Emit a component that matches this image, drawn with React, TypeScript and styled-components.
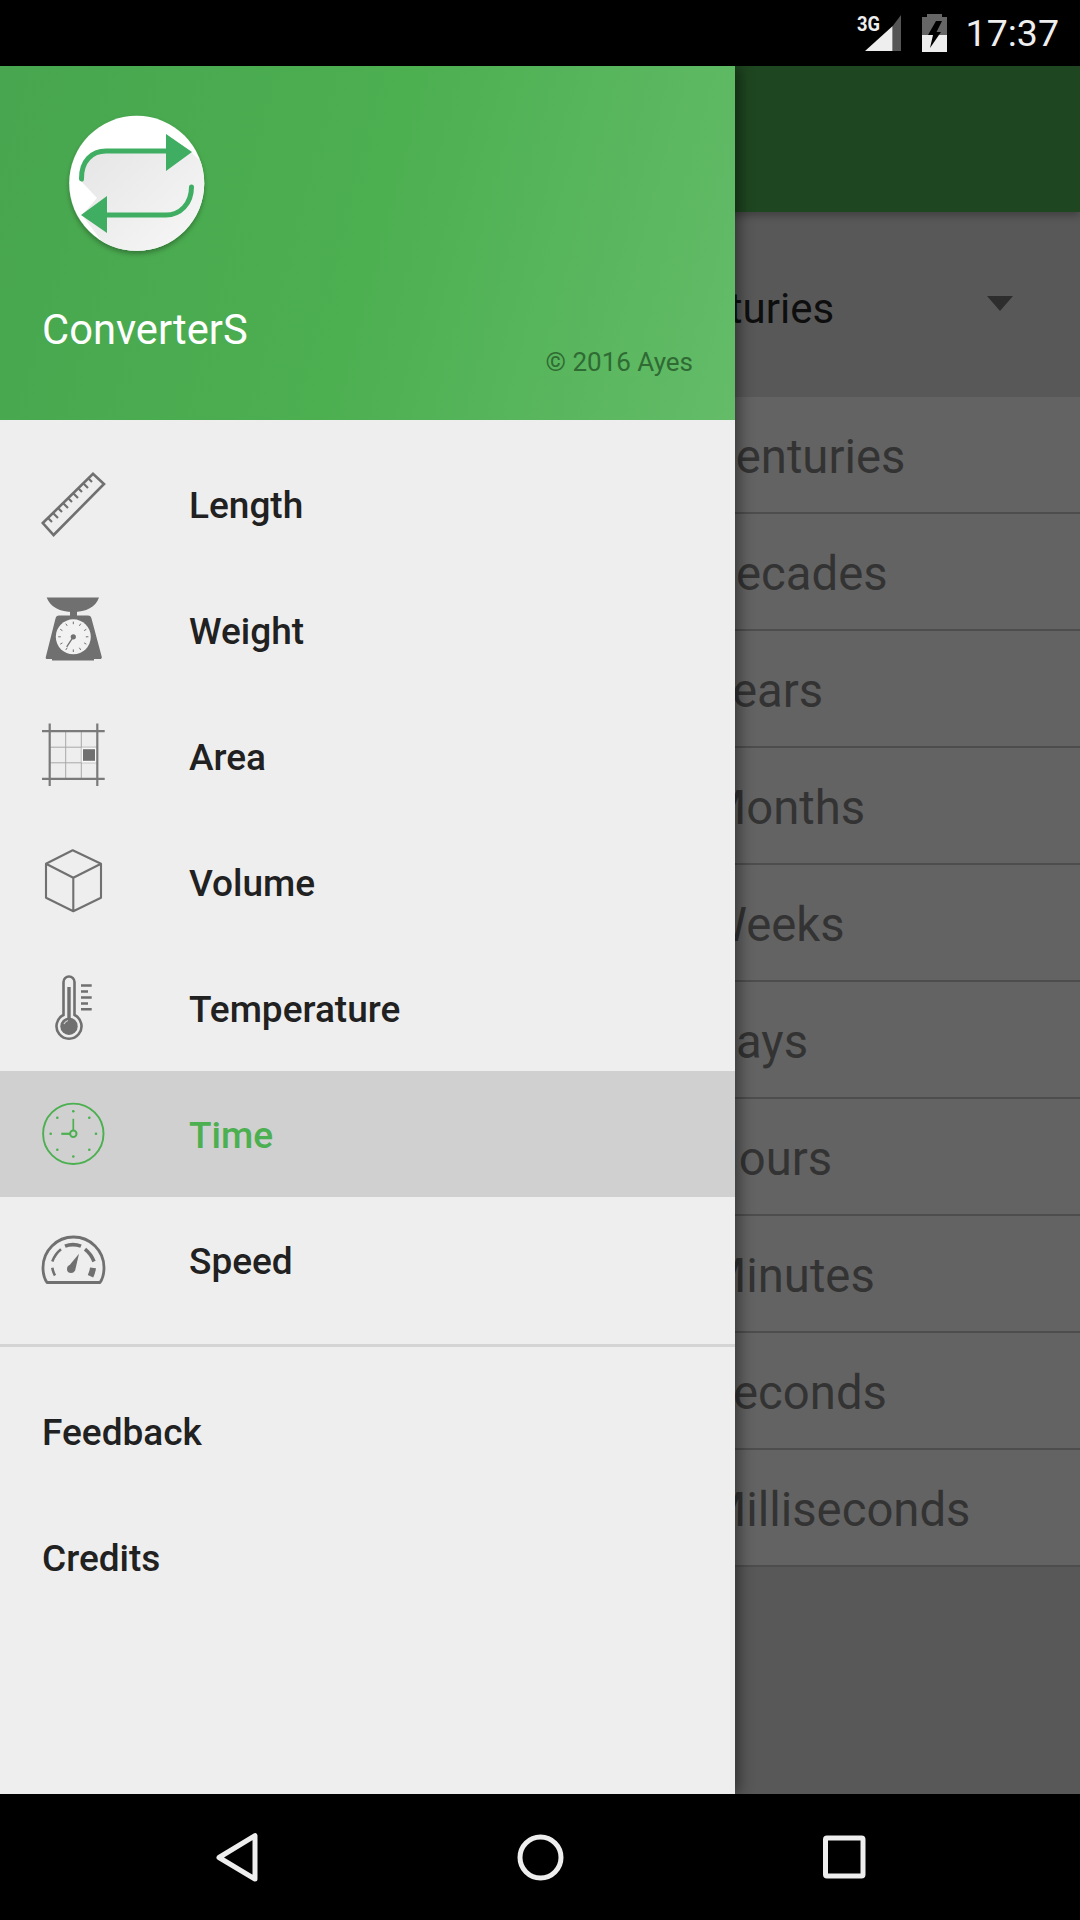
import React from "react";
import styled, { createGlobalStyle } from "styled-components";

const GlobalStyle = createGlobalStyle`
    html, body {
        margin: 0;
        padding: 0;
        background: #000;
    }
    * {
        box-sizing: border-box;
    }
`;

const GREY = "#707070";
const GREEN = "#4caf50";

const RulerIcon = () => (
    <IconSvg viewBox="0 0 63 63">
        <g fill="none" stroke={GREY}>
            <path d="M0.8 50 L51 0.8 L62 11 L11.6 62 Z" strokeWidth="2.6" />
            <path
                d="M6 45 L10 49 M11 40 L16 45 M16 35 L20 39 M21 30 L26 35 M26 25 L30 29 M31 20 L36 25 M36 15 L40 19 M41 10 L46 15 M46 5 L50 9"
                strokeWidth="2.2"
            />
        </g>
    </IconSvg>
);

const ScaleIcon = () => (
    <IconSvg viewBox="0 0 63 63">
        <path d="M4.7 -1.5 H57 C54 8 44 13 31 13 C18 13 8 8 4.7 -1.5 Z" fill={GREY} />
        <rect x="28" y="12" width="7" height="6" fill={GREY} />
        <path
            d="M17 16.5 H46 C48 16.5 49 17.5 49.5 19.5 L59.8 58 C60 59.5 59 60 58 60 H52 V61.5 H10 V60 H5 C4 60 3.5 59.5 3.8 58 L13.5 19.5 C14 17.5 15 16.5 17 16.5 Z"
            fill={GREY}
        />
        <circle cx="31.3" cy="37.8" r="17.5" fill="#f2f2f2" />
        <g stroke={GREY} strokeWidth="1" strokeLinecap="round">
            <path d="M31.3 23 V24.8 M38.5 25 L37.6 26.5 M44 30.5 L42.5 31.4 M46 37.8 H44.2 M44 45 L42.5 44.1 M38.5 50.6 L37.6 49.1 M31.3 52.6 V50.8 M24 50.6 L25 49.1 M18.6 45 L20.1 44.1 M16.6 37.8 H18.4 M18.6 30.5 L20.1 31.4 M24 25 L25 26.5" />
        </g>
        <path d="M31.3 37.8 L24.7 47.8" stroke={GREY} strokeWidth="1.3" />
        <circle cx="31.3" cy="37.8" r="2.6" fill={GREY} />
    </IconSvg>
);

const AreaIcon = () => (
    <IconSvg viewBox="0 0 63 63">
        <path d="M23.7 6 V54 M39.3 6 V54 M8 22.2 H55 M8 37.8 H55" stroke="#a8a8a8" strokeWidth="1" fill="none" />
        <rect x="39.6" y="22.6" width="15" height="15" fill="#f8f8f8" />
        <rect x="41" y="24.2" width="12" height="11.6" fill={GREY} />
        <path d="M0 6.2 H62.7 M0 53.8 H62.7 M7.7 -1.5 V61 M55.3 -1.5 V61" stroke="#7a7a7a" strokeWidth="2.2" fill="none" />
    </IconSvg>
);

const VolumeIcon = () => (
    <IconSvg viewBox="0 0 63 63">
        <path
            d="M30.7 -0.8 L59 12.8 V46.8 L31.3 60.2 L4 46.8 V12.8 Z M4 12.8 L31.3 26.8 L59 12.8 M31.3 26.8 V60.2"
            fill="none"
            stroke={GREY}
            strokeWidth="2.1"
            strokeLinejoin="round"
        />
    </IconSvg>
);

const ThermometerIcon = () => (
    <IconSvg viewBox="0 0 63 63">
        <path
            d="M21.5 38 V5 A5.5 5.5 0 0 1 32.5 5 V38 A12.5 12.5 0 1 1 21.5 38 Z"
            fill="none"
            stroke={GREY}
            strokeWidth="2.6"
        />
        <rect x="25.3" y="10" width="3.4" height="32" fill={GREY} />
        <circle cx="27" cy="49.2" r="8.7" fill={GREY} />
        <path d="M22 47 A6 6 0 0 1 26 43.5" stroke="#cfcfcf" strokeWidth="1.2" fill="none" />
        <path d="M39 8.5 H49.7 M39 14.5 H46 M39 20.5 H49.7 M39 26.5 H46 M39 32.2 H49.7" stroke={GREY} strokeWidth="2.4" />
    </IconSvg>
);

const ClockIcon = () => (
    <IconSvg viewBox="0 0 63 63">
        <g fill="none" stroke={GREEN}>
            <circle cx="31.3" cy="30.8" r="30.2" strokeWidth="1.9" />
            <circle cx="31.3" cy="30.8" r="3.2" strokeWidth="2" />
            <path d="M31.3 27.5 V15.8" strokeWidth="1.7" />
            <path d="M28 30.8 H19.3" strokeWidth="2.2" />
        </g>
        <g fill={GREEN}>
            <circle cx="31.3" cy="8.2" r="1.3" />
            <circle cx="47.3" cy="14.8" r="1.3" />
            <circle cx="54" cy="30.8" r="1.3" />
            <circle cx="47.3" cy="46.8" r="1.3" />
            <circle cx="31.3" cy="53.5" r="1.3" />
            <circle cx="15.3" cy="46.8" r="1.3" />
            <circle cx="8.7" cy="30.8" r="1.3" />
            <circle cx="15.3" cy="14.8" r="1.3" />
        </g>
    </IconSvg>
);

const SpeedIcon = () => (
    <IconSvg viewBox="0 0 63 63">
        <g fill="none" stroke={GREY}>
            <path
                d="M5 53.5 H58 C60.5 50 62 44 62 38.5 A30.5 30.5 0 0 0 1 38.5 C1 44 2.5 50 5 53.5 Z"
                strokeWidth="2.8"
                strokeLinejoin="round"
            />
            <path d="M23 17.2 Q31 14 39 17.2" strokeWidth="3.6" />
            <path d="M10.3 32.5 Q13 25 19 20.2" strokeWidth="2.6" />
            <path d="M43 20.2 Q49 25 52 32.5" strokeWidth="3.6" />
            <path d="M10.3 38.8 Q11 43 13 46.5" strokeWidth="2.6" />
            <path d="M51 38.8 Q50.5 43 48.5 47.2" strokeWidth="6" />
        </g>
        <path d="M37 24.8 L33 42 L26 38 Z" fill={GREY} />
        <circle cx="29" cy="40" r="4" fill={GREY} />
    </IconSvg>
);

const AppLogo = () => (
    <LogoSvg viewBox="0 0 180 170">
        <defs>
            <clipPath id="logoClip">
                <circle cx="86.7" cy="83.3" r="67.5" />
            </clipPath>
            <linearGradient id="logoShade" x1="0" y1="0" x2="1" y2="1">
                <stop offset="0" stopColor="#e4e4e4" />
                <stop offset="1" stopColor="#f8f8f8" />
            </linearGradient>
            <filter id="logoShadow" x="-20%" y="-20%" width="140%" height="140%">
                <feDropShadow dx="0" dy="3" stdDeviation="2.5" floodColor="#000" floodOpacity="0.3" />
            </filter>
        </defs>
        <circle cx="86.7" cy="83.3" r="67.5" fill="#fff" filter="url(#logoShadow)" />
        <path
            d="M30 80 C30 62 42 51 56 51 H116 V34 L141 52 L160 70 V155 H62 L32 115 L47 98 Z"
            fill="url(#logoShade)"
            clipPath="url(#logoClip)"
        />
        <g fill="none" stroke="#3fae62" strokeWidth="5" strokeLinecap="round">
            <path d="M31.5 79 C31 61 42 51 56 51 H118" />
            <path d="M141.5 87 C141.5 104 130 115 116 115 H55" />
        </g>
        <path d="M116 34 L142 52 L116 71 Z M57 96 L31 115 L57 133 Z" fill="#3fae62" />
    </LogoSvg>
);

const NAV_ITEMS = [
    { label: "Length", Icon: RulerIcon },
    { label: "Weight", Icon: ScaleIcon },
    { label: "Area", Icon: AreaIcon },
    { label: "Volume", Icon: VolumeIcon },
    { label: "Temperature", Icon: ThermometerIcon },
    { label: "Time", Icon: ClockIcon, active: true },
    { label: "Speed", Icon: SpeedIcon }
];

const UNITS = [
    "Centuries",
    "Decades",
    "Years",
    "Months",
    "Weeks",
    "Days",
    "Hours",
    "Minutes",
    "Seconds",
    "Milliseconds"
];

const App: React.FC = () => {
    return (
        <Screen>
            <GlobalStyle />
            <StatusBar>
                <StatusIcon width="46" height="40" viewBox="0 0 46 40">
                    <text x="0" y="18" fill="#eee" fontFamily="Roboto, sans-serif" fontSize="20" fontWeight="700" textLength="23" lengthAdjust="spacingAndGlyphs">
                        3G
                    </text>
                    <path d="M8 38 L35.7 13 V38 Z" fill="#eee" />
                    <path d="M35.7 13 L44 2 V38 H35.7 Z" fill="#555" />
                </StatusIcon>
                <StatusIcon width="25" height="38" viewBox="0 0 25 38">
                    <path d="M5 0 H20 V3 H25 V21 H0 V3 H5 Z" fill="#666" />
                    <rect x="0" y="21" width="25" height="17" fill="#eee" />
                    <path d="M14 7 H20 L14.5 18 H19 L8 34 L11 21 H6 Z" fill="#000" />
                </StatusIcon>
                <Clock>17:37</Clock>
            </StatusBar>

            <Main>
                <Content>
                    <AppBar />
                    <Spinner>
                        <SpinnerText>Centuries</SpinnerText>
                        <Caret />
                    </Spinner>
                    <UnitList>
                        {UNITS.map((unit) => (
                            <UnitRow key={unit}>{unit}</UnitRow>
                        ))}
                    </UnitList>
                </Content>

                <Drawer>
                    <DrawerHeader>
                        <AppLogo />
                        <HeaderRow>
                            <AppName>ConverterS</AppName>
                            <Copyright>© 2016 Ayes</Copyright>
                        </HeaderRow>
                    </DrawerHeader>
                    <NavSection>
                        {NAV_ITEMS.map(({ label, Icon, active }) => (
                            <NavRow key={label} $active={active}>
                                <Icon />
                                <NavLabel $active={active}>{label}</NavLabel>
                            </NavRow>
                        ))}
                    </NavSection>
                    <Divider />
                    <NavRow>
                        <NavLabel>Feedback</NavLabel>
                    </NavRow>
                    <NavRow>
                        <NavLabel>Credits</NavLabel>
                    </NavRow>
                </Drawer>
            </Main>

            <NavBar>
                <SoftKey viewBox="0 0 63 63">
                    <path d="M50 9.7 V53 L14 31.5 Z" strokeLinejoin="round" />
                </SoftKey>
                <SoftKey viewBox="0 0 63 63">
                    <circle cx="31.5" cy="31.5" r="20.5" />
                </SoftKey>
                <SoftKey viewBox="0 0 63 63">
                    <rect x="12.5" y="12" width="37.5" height="38" rx="1.5" />
                </SoftKey>
            </NavBar>
        </Screen>
    );
};

const Screen = styled.div`
    display: flex;
    flex-direction: column;
    width: 1080px;
    height: 1920px;
    overflow: hidden;
    font-family: Roboto, "Liberation Sans", sans-serif;
`;

const StatusBar = styled.div`
    display: flex;
    justify-content: flex-end;
    align-items: center;
    gap: 19px;
    height: 66px;
    padding-right: 21px;
    background-color: #000;
`;

const StatusIcon = styled.svg`
    flex-shrink: 0;
`;

const Clock = styled.div`
    font-size: 37.5px;
    color: #eeeeee;
`;

const Main = styled.div`
    position: relative;
    flex: 1;
    background-color: #585858;
`;

const Content = styled.div`
    display: flex;
    flex-direction: column;
`;

const AppBar = styled.div`
    height: 146px;
    background-color: #1e4620;
    box-shadow: rgb(0 0 0 / 30%) 0px 3px 8px 0px;
    position: relative;
`;

const Spinner = styled.div`
    display: flex;
    align-items: center;
    height: 185px;
    padding: 0 67px 0 656px;
    justify-content: space-between;
`;

const SpinnerText = styled.div`
    font-size: 42px;
    color: #0e0e0e;
    padding-top: 7px;
`;

const Caret = styled.div`
    width: 0;
    height: 0;
    margin-bottom: 3px;
    border-left: 13px solid transparent;
    border-right: 13px solid transparent;
    border-top: 15px solid #2d2d2d;
`;

const UnitList = styled.div`
    display: flex;
    flex-direction: column;
`;

const UnitRow = styled.div`
    display: flex;
    align-items: center;
    height: 117px;
    padding: 5px 0 0 705px;
    font-size: 47.25px;
    color: #333333;
    background-color: #636363;
    border-bottom: 2px solid #4d4d4d;
`;

const Drawer = styled.div`
    position: absolute;
    top: 0;
    left: 0;
    bottom: 0;
    display: flex;
    flex-direction: column;
    width: 735px;
    background-color: #eeeeee;
    box-shadow: rgb(0 0 0 / 45%) 4px 0px 14px 0px;
`;

const DrawerHeader = styled.div`
    display: flex;
    flex-direction: column;
    height: 354px;
    padding: 34px 42px 0 42px;
    background: linear-gradient(105deg, #47a64f 0%, #4caf50 50%, #64bc69 100%);
`;

const LogoSvg = styled.svg`
    width: 180px;
    height: 170px;
    margin-left: 8px;
`;

const HeaderRow = styled.div`
    display: flex;
    justify-content: space-between;
    align-items: flex-end;
    margin-top: 35px;
`;

const AppName = styled.div`
    font-size: 41.7px;
    color: #ffffff;
`;

const Copyright = styled.div`
    font-size: 26px;
    color: #2f6b33;
    margin-bottom: -23px;
`;

const NavSection = styled.div`
    display: flex;
    flex-direction: column;
    padding-top: 21px;
`;

const NavRow = styled.div<{ $active?: boolean }>`
    display: flex;
    align-items: center;
    gap: 84px;
    height: 126px;
    padding-left: 42px;
    background-color: ${(props) => (props.$active ? "#d0d0d0" : "transparent")};
`;

const IconSvg = styled.svg`
    flex-shrink: 0;
    width: 63px;
    height: 63px;
    overflow: visible;
`;

const NavLabel = styled.div<{ $active?: boolean }>`
    font-size: 37px;
    font-weight: 500;
    padding-top: 2px;
    color: ${(props) => (props.$active ? GREEN : "#212121")};
`;

const Divider = styled.div`
    height: 3px;
    margin: 21px 0;
    background-color: #d4d4d4;
`;

const NavBar = styled.div`
    display: flex;
    justify-content: center;
    align-items: center;
    gap: 241px;
    height: 126px;
    background-color: #000;
`;

const SoftKey = styled.svg`
    width: 63px;
    height: 63px;
    fill: none;
    stroke: #eeeeee;
    stroke-width: 5;
`;

export default App;
